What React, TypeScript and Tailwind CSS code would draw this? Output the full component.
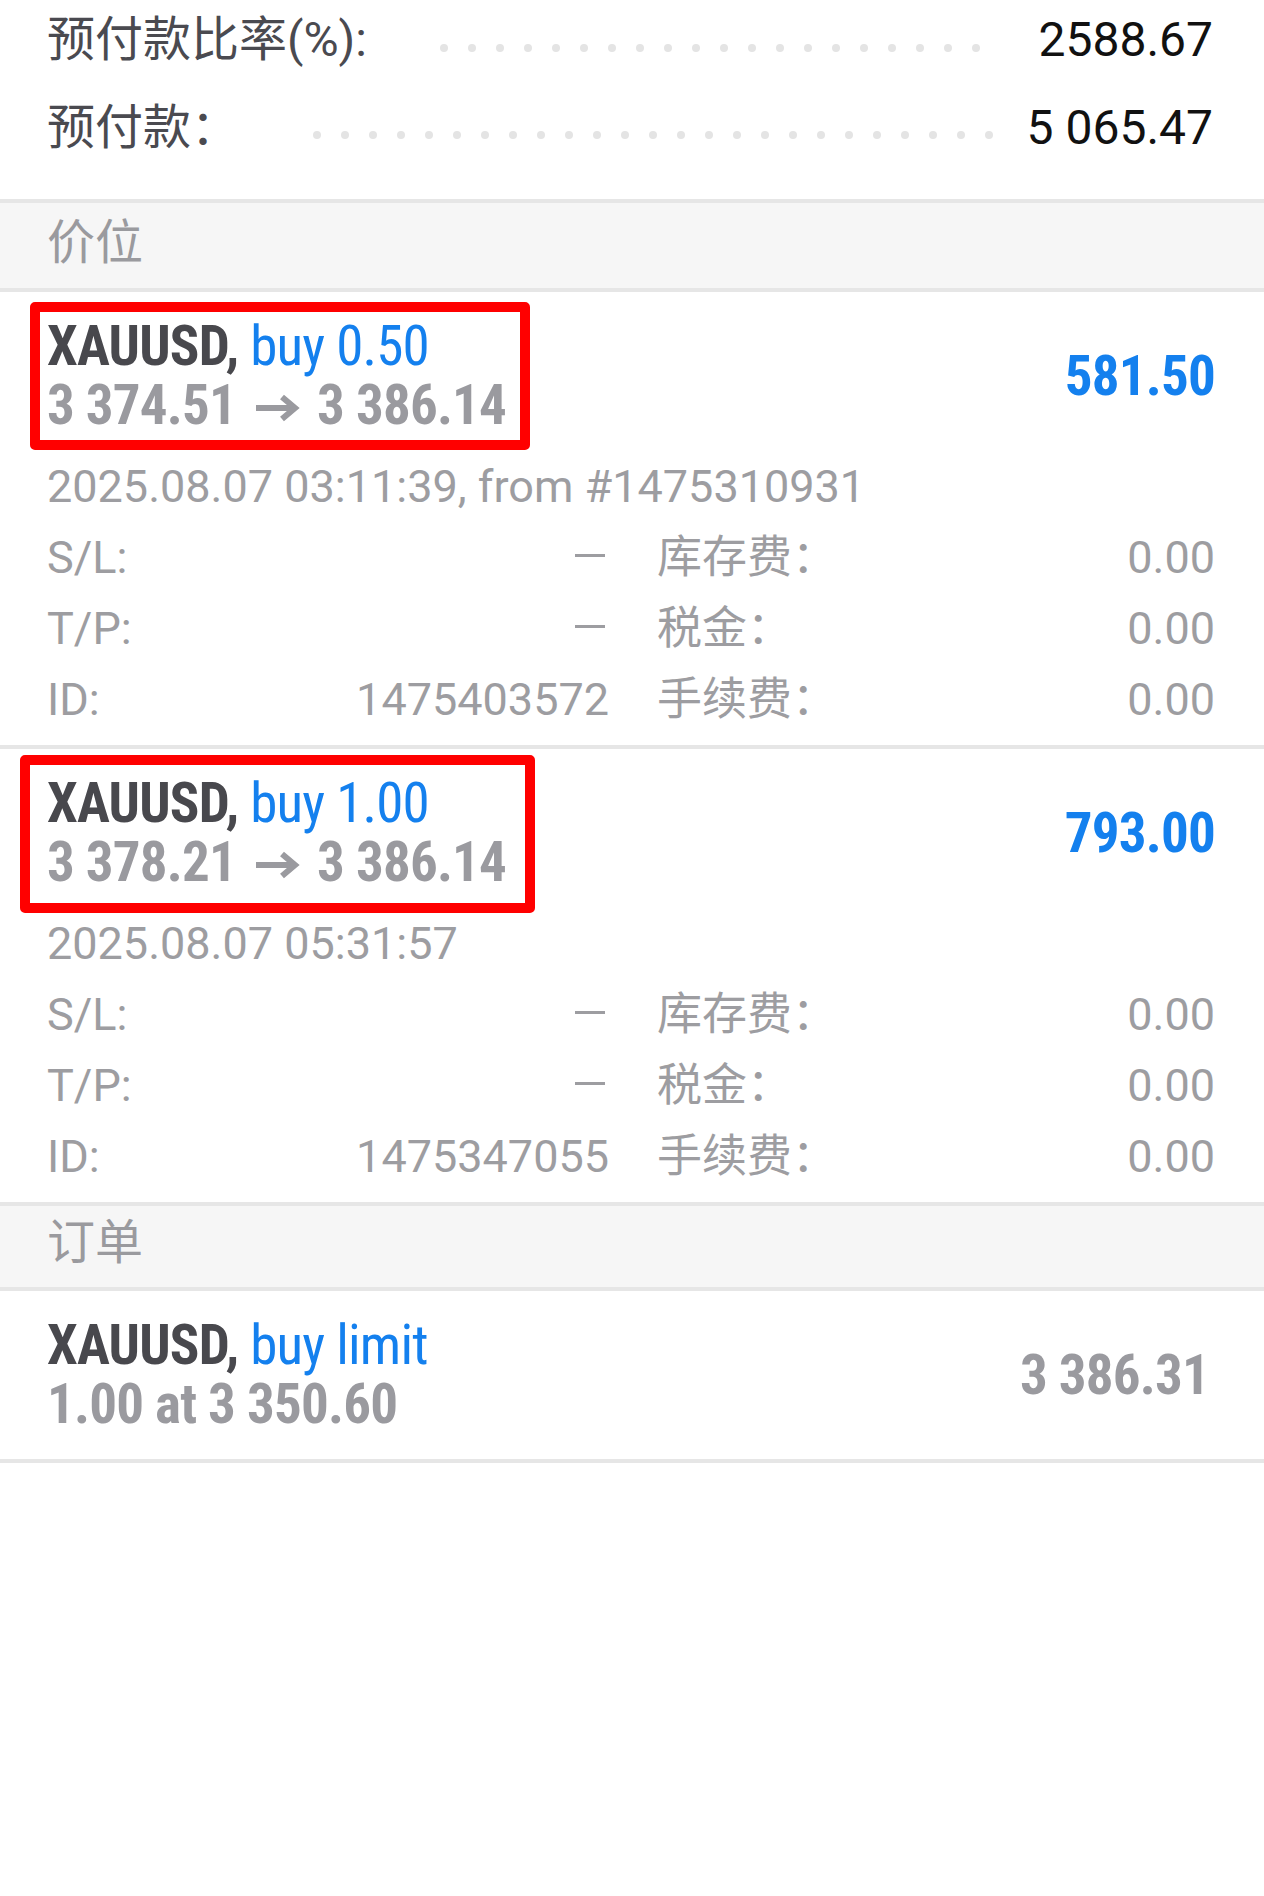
import React from 'react';

type Position = {
  lots: string;
  open: string;
  current: string;
  profit: string;
  time: string;
  id: string;
  box: string;
};

const positions: Position[] = [
  {
    lots: 'buy 0.50',
    open: '3 374.51',
    current: '3 386.14',
    profit: '581.50',
    time: '2025.08.07 03:11:39, from #1475310931',
    id: '1475403572',
    box: 'left-[30px] top-[10px] w-[500px] h-[148px]',
  },
  {
    lots: 'buy 1.00',
    open: '3 378.21',
    current: '3 386.14',
    profit: '793.00',
    time: '2025.08.07 05:31:57',
    id: '1475347055',
    box: 'left-[20px] top-[6px] w-[515px] h-[158px]',
  },
];

function Dots({ count }: { count: number }) {
  return (
    <div className="flex gap-[20px]">
      {Array.from({ length: count }).map((_, i) => (
        <span key={i} className="block w-[8px] h-[8px] rounded-full bg-[#e4e4e4]" />
      ))}
    </div>
  );
}

function Arrow() {
  return (
    <svg
      className="mb-[2px] ml-[19px] mr-[16px] inline-block"
      width="46"
      height="28"
      viewBox="0 0 46 28"
      fill="none"
      stroke="currentColor"
      strokeWidth="6"
    >
      <path d="M1 14H39" />
      <path d="M27 3L40 14L27 25" strokeLinejoin="miter" />
    </svg>
  );
}

function SectionHeader({ title, height, leading }: { title: string; height: string; leading: string }) {
  return (
    <div className={`border-b-4 border-[#e6e6e6] bg-[#f6f6f6] px-[47px] text-[48px] text-[#9a9a9e] ${height} ${leading}`}>
      {title}
    </div>
  );
}

function DetailRow({ label, value, dash }: { label: string; value: string; dash?: boolean }) {
  return (
    <div className="flex items-center justify-between">
      <span>{label}</span>
      {dash ? (
        <span className="mr-[4px] block h-[3px] w-[30px] -translate-y-[2px] bg-[#9d9da1]" />
      ) : (
        <span>{value}</span>
      )}
    </div>
  );
}

function PositionCard({ p }: { p: Position }) {
  return (
    <div className="relative border-b-4 border-[#e6e6e6] pl-[47px] pr-[49px] pt-[25px] pb-[10px]">
      {/* red highlight */}
      <div className={`pointer-events-none absolute rounded-[5px] border-[10px] border-[#ff0000] ${p.box}`} />

      <div className="flex items-center justify-between font-['Roboto_Condensed','Roboto',sans-serif] text-[55px] leading-[59px] tracking-[-0.8px]">
        <div>
          <div>
            <span className="font-bold text-[#48484d]">XAUUSD,</span>{' '}
            <span className="text-[#1480ee]">{p.lots}</span>
          </div>
          <div className="font-bold text-[#9a9a9f]">
            {p.open}
            <Arrow />
            {p.current}
          </div>
        </div>
        <div className="font-bold text-[#1480ee]">{p.profit}</div>
      </div>

      <div className="mt-[16px] text-[45px] leading-[71px] text-[#9d9da1]">{p.time}</div>

      <div className="grid grid-cols-[562px_1fr] gap-x-[48px] text-[45px] leading-[71px] text-[#9d9da1]">
        <DetailRow label="S/L:" value="" dash />
        <DetailRow label="库存费：" value="0.00" />
        <DetailRow label="T/P:" value="" dash />
        <DetailRow label="税金：" value="0.00" />
        <DetailRow label="ID:" value={p.id} />
        <DetailRow label="手续费：" value="0.00" />
      </div>
    </div>
  );
}

export default function App() {
  return (
    <div className="min-h-[1896px] w-[1264px] bg-white font-['Roboto','Noto_Sans_CJK_SC',sans-serif]">
      {/* account summary */}
      <div className="border-b-4 border-[#e6e6e6] pl-[47px] pr-[51px] pb-[24px] text-[48px]">
        <div className="flex h-[80px] items-center leading-[80px]">
          <span className="text-[#4a4a50]">预付款比率(%):</span>
          <div className="ml-[73px] translate-y-[8px]">
            <Dots count={20} />
          </div>
          <span className="ml-auto text-[#111111]">2588.67</span>
        </div>
        <div className="flex h-[95px] items-center leading-[95px]">
          <span className="text-[#4a4a50]">预付款：</span>
          <div className="ml-[74px] translate-y-[7px]">
            <Dots count={25} />
          </div>
          <span className="ml-auto text-[#111111]">5 065.47</span>
        </div>
      </div>

      <SectionHeader title="价位" height="h-[89px]" leading="leading-[80px]" />

      {positions.map((p) => (
        <PositionCard key={p.id} p={p} />
      ))}

      <SectionHeader title="订单" height="h-[85px]" leading="leading-[74px]" />

      {/* pending order */}
      <div className="border-b-4 border-[#e6e6e6] pl-[47px] pr-[55px] pt-[25px] pb-[25px]">
        <div className="flex items-center justify-between font-['Roboto_Condensed','Roboto',sans-serif] text-[55px] leading-[59px] tracking-[-0.8px]">
          <div>
            <div>
              <span className="font-bold text-[#48484d]">XAUUSD,</span>{' '}
              <span className="text-[#1480ee]">buy limit</span>
            </div>
            <div className="font-bold text-[#9a9a9f]">1.00 at 3 350.60</div>
          </div>
          <div className="font-bold text-[#9a9a9f]">3 386.31</div>
        </div>
      </div>
    </div>
  );
}
